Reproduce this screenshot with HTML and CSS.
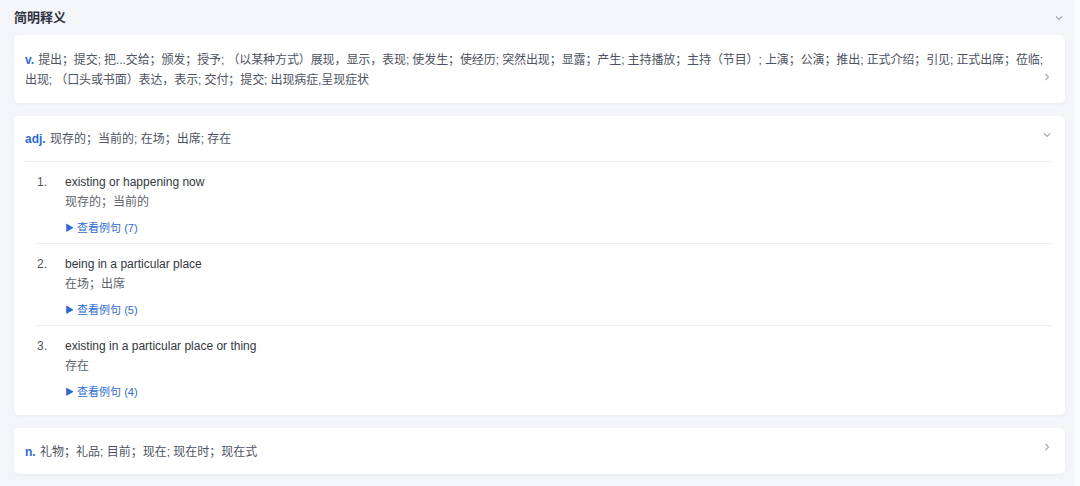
FILE: index.html
```html
<!DOCTYPE html>
<html lang="zh-CN">
<head>
<meta charset="utf-8">
<link rel="stylesheet" href="styles.css">
</head>
<body>
<div class="layout">
  <main class="main">
    <div class="section-head">
      <h2 class="title">简明释义</h2>
      <svg class="chev chev-head" width="10" height="10" viewBox="0 0 10 10"><polyline points="2,3.5 5,6.5 8,3.5" fill="none" stroke="#a3a8b3" stroke-width="1.1"/></svg>
    </div>

    <div class="card card-v">
      <p class="defs defs-v"><span class="line"><span class="pos">v.</span> 提出；提交; 把...交给；颁发；授予; （以某种方式）展现，显示，表现; 使发生；使经历; 突然出现；显露；产生; 主持播放；主持（节目）; 上演；公演；推出; 正式介绍；引见; 正式出席；莅临;</span><br><span class="line">出现; （口头或书面）表达，表示; 交付；提交; 出现病症,呈现症状</span></p>
      <svg class="chev chev-right" width="10" height="10" viewBox="0 0 10 10"><polyline points="3.5,2 6.5,5 3.5,8" fill="none" stroke="#a3a8b3" stroke-width="1.1"/></svg>
    </div>

    <div class="card card-adj">
      <div class="adj-head">
        <p class="defs"><span class="pos">adj.</span> 现存的；当前的; 在场；出席; 存在</p>
        <svg class="chev chev-down" width="10" height="10" viewBox="0 0 10 10"><polyline points="2,3.5 5,6.5 8,3.5" fill="none" stroke="#a3a8b3" stroke-width="1.1"/></svg>
      </div>
      <ol class="senses">
        <li class="sense">
          <span class="num">1.</span>
          <div class="sense-body">
            <div class="en">existing or happening now</div>
            <div class="zh">现存的；当前的</div>
            <div class="ex"><span class="tri">▶</span> 查看例句 (7)</div>
          </div>
        </li>
        <li class="sense">
          <span class="num">2.</span>
          <div class="sense-body">
            <div class="en">being in a particular place</div>
            <div class="zh">在场；出席</div>
            <div class="ex"><span class="tri">▶</span> 查看例句 (5)</div>
          </div>
        </li>
        <li class="sense">
          <span class="num">3.</span>
          <div class="sense-body">
            <div class="en">existing in a particular place or thing</div>
            <div class="zh">存在</div>
            <div class="ex"><span class="tri">▶</span> 查看例句 (4)</div>
          </div>
        </li>
      </ol>
    </div>

    <div class="card card-n">
      <p class="defs"><span class="pos">n.</span> 礼物；礼品; 目前；现在; 现在时；现在式</p>
      <svg class="chev chev-right-n" width="10" height="10" viewBox="0 0 10 10"><polyline points="3.5,2 6.5,5 3.5,8" fill="none" stroke="#a3a8b3" stroke-width="1.1"/></svg>
    </div>
  </main>
  <div class="rail"></div>
</div>
</body>
</html>
```

FILE: styles.css
```css
* { box-sizing: border-box; }
html, body { margin: 0; padding: 0; }
body {
  background: #f4f5f8;
  font-family: "Liberation Sans", "Noto Sans CJK SC", sans-serif;
  color: #333;
  width: 1080px;
  height: 486px;
  overflow: hidden;
}
.layout { display: flex; height: 486px; }
.main { width: 1075px; padding: 0 10px 0 14px; }
.rail { width: 5px; background: #fafbfc; }

.section-head {
  height: 35px;
  display: flex;
  align-items: center;
  justify-content: space-between;
}
.title {
  margin: 0;
  font-size: 13px;
  font-weight: bold;
  color: #2f3440;
  line-height: 20px;
  padding-top: 1px;
}
.chev { display: block; flex: none; }
.chev-head { margin-right: 1px; }

.card {
  background: #fff;
  border-radius: 5px;
  box-shadow: 0 1px 3px rgba(30, 40, 70, 0.05);
  margin-bottom: 13px;
}
.defs {
  margin: 0;
  font-size: 12px;
  line-height: 20px;
  color: #4d5362;
}
.pos {
  color: #2f6bd0;
  font-weight: bold;
  margin-right: 1px;
}

.card-v {
  display: flex;
  align-items: flex-start;
  padding: 15px 13px 13px 11px;
  height: 68px;
}
.defs-v { flex: 1; min-width: 0; letter-spacing: -0.1px; }
.line { white-space: nowrap; }
.chev-right { margin-top: 22px; }

.card-adj { padding: 13px 12px 11px 11px; height: 299px; }
.adj-head {
  display: flex;
  align-items: flex-start;
  justify-content: space-between;
  padding-bottom: 12px;
  border-bottom: 1px solid #eceef2;
}
.chev-down { margin-top: 1px; margin-right: 1px; }

.senses { list-style: none; margin: 0; padding: 0 0 0 12px; }
.sense {
  display: flex;
  padding: 10px 0 5px;
  border-bottom: 1px solid #eceef2;
}
.sense:last-child { border-bottom: none; }
.num {
  width: 28px;
  flex: none;
  font-size: 12px;
  line-height: 20px;
  color: #50555f;
}
.en { font-size: 12px; line-height: 20px; color: #333740; }
.zh { font-size: 12px; line-height: 20px; color: #5d626c; }
.ex {
  margin-top: 6px;
  font-size: 11px;
  line-height: 20px;
  color: #2f6bd0;
}
.tri { font-size: 9px; display: inline-block; vertical-align: 1px; }

.card-n {
  display: flex;
  align-items: center;
  justify-content: space-between;
  padding: 0 13px 0 11px;
  height: 46px;
}
.card-n .defs { padding-top: 1px; }
.chev-right-n { margin-top: -8px; }
```
